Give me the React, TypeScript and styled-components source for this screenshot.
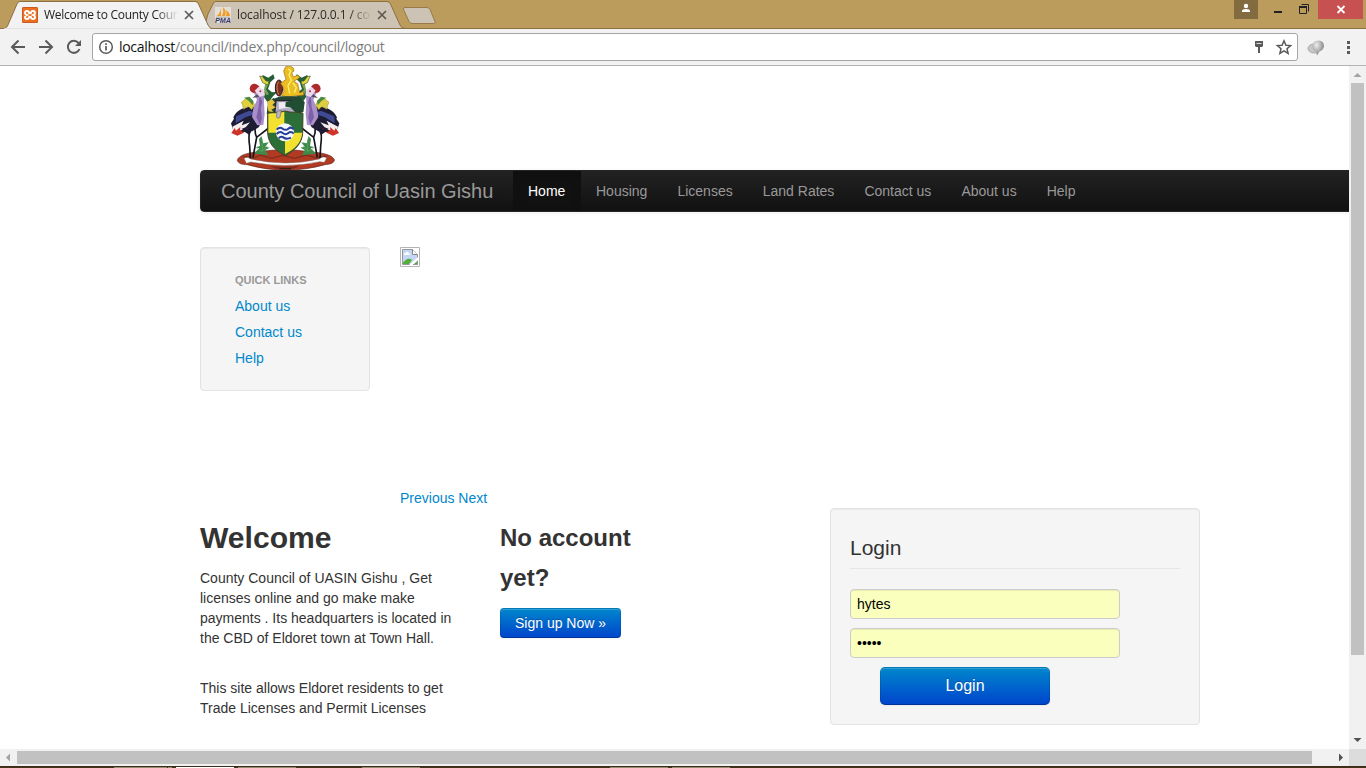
import React from 'react';
import styled, { createGlobalStyle } from 'styled-components';

const Global = createGlobalStyle`
  * { box-sizing: border-box; }
  html, body, #root { height: 100%; margin: 0; }
  body {
    overflow: hidden;
    font: 14px/20px "Liberation Sans", Arial, sans-serif;
    color: #333;
    background: #fff;
  }
  h2, h3, p, ul { margin: 0; padding: 0; }
  ul { list-style: none; }
  a { color: #0088cc; text-decoration: none; }
`;

const Browser = styled.div`
  display: flex;
  flex-direction: column;
  width: 1366px;
  height: 768px;
`;

/* ---- window frame ---- */
const TitleBar = styled.div`
  position: relative;
  display: flex;
  height: 29px;
  background: #bc9c5c;
  border-bottom: 1px solid #8c6f43;
`;
const TabShapes = styled.svg`
  position: absolute;
  left: 0;
  top: 0;
`;
const Tab = styled.div<{ $first?: boolean }>`
  position: relative;
  display: flex;
  align-items: center;
  width: ${p => (p.$first ? 197 : 193)}px;
  height: 29px;
  padding-left: ${p => (p.$first ? 22 : 18)}px;
  color: ${p => (p.$first ? '#222' : '#2d2925')};
`;
const TabTitle = styled.span<{ $ls: number }>`
  width: 137px;
  margin: 1px 0 0 6px;
  white-space: nowrap;
  font: 12px/16px "Open Sans", "Noto Sans", sans-serif;
  letter-spacing: ${p => p.$ls}px;
  mask-image: linear-gradient(90deg, #000 82%, transparent 98%);
`;
const WindowButtons = styled.div`
  display: flex;
  margin-left: auto;
  position: relative;
`;

/* ---- toolbar ---- */
const Toolbar = styled.div`
  display: flex;
  align-items: flex-start;
  height: 37px;
  padding: 4px 0 0;
  background: #f2f2f2;
  border-bottom: 1px solid #b4b3b1;
`;
const NavIcons = styled.svg`
  width: 92px;
  height: 28px;
`;
const Omnibox = styled.div`
  display: flex;
  align-items: center;
  width: 1206px;
  height: 28px;
  padding: 0 5px;
  background: #fff;
  border: 1px solid #a6a6a6;
  border-radius: 3px;
`;
const Url = styled.span`
  flex: 1;
  margin-left: 5px;
  font: 14px/20px "Open Sans", "Noto Sans", sans-serif;
  letter-spacing: -0.3px;
  color: #7d7d7d;
  b { font-weight: 400; color: #111; }
`;

/* ---- scrollable area ---- */
const Body = styled.div`
  display: flex;
  height: 683px;
`;
const Viewport = styled.main`
  width: 1349px;
  padding-left: 200px;
  overflow: hidden;
`;
const VScroll = styled.div`
  display: flex;
  flex-direction: column;
  align-items: center;
  width: 17px;
  background: #f1f1f1;
`;
const VThumb = styled.div`
  width: 13px;
  height: 572px;
  margin-bottom: 77px;
  background: #c1c1c1;
`;
const HScroll = styled.div`
  display: flex;
  align-items: center;
  height: 17px;
  background: #f1f1f1;
`;
const HThumb = styled.div`
  width: 1295px;
  height: 13px;
  margin-right: 20px;
  background: #c1c1c1;
`;
const Corner = styled.div`
  width: 17px;
  height: 17px;
  background: #dcdcdc;
`;
const Taskbar = styled.div`
  display: flex;
  height: 2px;
  background: #43331c;
  border-top: 1px solid #3c2d18;
`;
const TaskItem = styled.i<{ $gap: number; $w: number; $c?: string }>`
  width: ${p => p.$w}px;
  margin-left: ${p => p.$gap}px;
  background: ${p => p.$c || '#958a76'};
`;

/* ---- site ---- */
const Crest = styled.svg`
  display: block;
  width: 130px;
  height: 104px;
  margin-left: 20px;
`;
const Navbar = styled.nav`
  display: flex;
  width: 1170px;
  height: 42px;
  padding-left: 1px;
  background: linear-gradient(#222, #111);
  border: 1px solid #252525;
  border-radius: 4px;
  box-shadow: 0 1px 4px rgba(0, 0, 0, 0.065);
`;
const Brand = styled.a`
  width: 311px;
  padding: 10px 0 10px 19px;
  font-size: 20px;
  color: #999;
  white-space: nowrap;
`;
const NavLink = styled.a<{ $active?: boolean }>`
  padding: 10px ${p => (p.$active ? 15.65 : 15.05)}px 10px 15px;
  color: ${p => (p.$active ? '#fff' : '#999')};
  background: ${p => (p.$active ? '#111' : 'transparent')};
  box-shadow: ${p => (p.$active ? 'inset 0 3px 8px rgba(0,0,0,.125)' : 'none')};
`;
const Row = styled.div`
  display: flex;
  align-items: flex-start;
`;
const TopRow = styled(Row)`
  height: 261px;
  margin-top: 35px;
  gap: 30px;
`;
const Well = styled.section`
  background: #f5f5f5;
  border: 1px solid #e3e3e3;
  border-radius: 4px;
  box-shadow: inset 0 1px 1px rgba(0, 0, 0, 0.05);
`;
const QuickLinks = styled(Well)`
  width: 170px;
  height: 144px;
  padding: 22px 34px;
`;
const LinksHead = styled.div`
  font-size: 11px;
  font-weight: 700;
  line-height: 20px;
  margin-bottom: 3px;
  color: #999;
  text-transform: uppercase;
  white-space: nowrap;
`;
const QuickLink = styled.li`
  padding: 3px 0;
`;
const Carousel = styled.div`
  display: flex;
  flex-direction: column;
  justify-content: space-between;
  height: 261px;
`;
const Welcome = styled.div`
  width: 270px;
  margin-right: 30px;
  padding-top: 10px;
  h2 { font-size: 30.1px; line-height: 40px; margin-bottom: 10px; }
  p { width: 262px; }
  p + p { margin-top: 30px; }
`;
const SignUp = styled.div`
  width: 170px;
  margin-right: 160px;
  padding-top: 10px;
  h3 { font-size: 24px; line-height: 40px; margin-bottom: 10px; }
`;
const Button = styled.button<{ $large?: boolean }>`
  display: block;
  width: ${p => (p.$large ? 170 : 121)}px;
  height: ${p => (p.$large ? 38 : 30)}px;
  margin: ${p => (p.$large ? '9px 0 0 30px' : '0')};
  padding: 0;
  font: ${p => (p.$large ? 16 : 14)}px/20px "Liberation Sans", Arial, sans-serif;
  color: #fff;
  text-shadow: 0 -1px 0 rgba(0, 0, 0, 0.25);
  background: linear-gradient(#0088cc, #0044cc) border-box;
  border: 1px solid;
  border-color: rgba(0, 0, 0, 0.1) rgba(0, 0, 0, 0.1) rgba(0, 0, 0, 0.25);
  border-radius: ${p => (p.$large ? 5 : 4)}px;
  box-shadow: inset 0 1px 0 rgba(255, 255, 255, 0.2), 0 1px 2px rgba(0, 0, 0, 0.05);
`;
const LoginBox = styled(Well)`
  width: 370px;
  height: 217px;
  padding: 19px;
`;
const Legend = styled.div`
  height: 41px;
  margin-bottom: 20px;
  font-size: 21px;
  line-height: 40px;
  border-bottom: 1px solid #e5e5e5;
`;
const Input = styled.input`
  display: block;
  width: 270px;
  height: 30px;
  padding: 4px 6px;
  font: 14px/20px "Liberation Sans", Arial, sans-serif;
  color: #000;
  background: #faffbd;
  border: 1px solid #ccc;
  border-radius: 4px;
  box-shadow: inset 0 1px 1px rgba(0, 0, 0, 0.075);
  outline: 0;
  & + & { margin-top: 9px; }
`;

const ScrollArrow = styled.svg.attrs({ width: 17, height: 17, viewBox: '0 0 17 17' })`
  flex: none;
`;

const Close = ({ c }: { c: string }) => (
  <svg width="16" height="16" viewBox="0 0 16 16"><path d="M4 4l8 8M12 4l-8 8" stroke={c} strokeWidth="1.700" /></svg>
);

const Bird = () => (
  <g>
    <path d="M92 196C84 215 86 232 89 252L91 290M106 190c0 12-4 20 4 36l36-28M110 226l-11 60" stroke="#15131c" strokeWidth="5" fill="none" />
    <path d="M40 166c10-22 36-34 64-31l28 17-4 24-12 20-20 12-22-2-16-10-20 4-5-16 9-14z" fill="#1d1c33" />
    <path d="M48 163l40-17 24 8-36 12-29 18z" fill="#3f4a94" />
    <path d="M37 194l34-18-6 14 25-9-13 15-37 15z" fill="#f4eeee" />
    <path d="M34 213l10-15 4 8 13-11-1 10 24-7-14 15-18 8z" fill="#cf3429" />
    <path d="M62 207l14-10 20 8-8 14-12-8z" fill="#1d1c33" />
    <path d="M102 93c14-8 29-7 31 6l-1 23 2 34-4 33-18 1-16-25 4-26 11-26z" fill="#ab8fca" />
    <path d="M119 100l8 20-5 20 4 28-6 20-11-22 7-32z" fill="#7c61a6" />
    <path d="M89 80c1-17 20-20 28-7l2 15-15 5c-9 0-14-6-15-13z" fill="#b02a2c" />
    <path d="M104 86l12-12 17 10 2 16-16 5z" fill="#ebdaec" />
    <circle cx="121" cy="88" r="3" fill="#b22d35" />
    <path d="M111 97l-14 11 21-4z" fill="#555059" />
    <path d="M64 121l17-14 16 8 7 14-9 14-10-10-14 9-3-12z" fill="#dfce3e" stroke="#8d8b34" strokeWidth="1.500" />
    <path d="M72 107l16-3 12 13-2 13-12-14z" fill="#4b8a42" />
  </g>
);

const HalfMantle = () => (
  <g>
    <path d="M145 156l3-28-18-25 6-38-12-12 4-14 17 8 15-10 4 12-13 12-7 20 12 10 16-2-13 14-8 10 13 12 9 24z" fill="#255f36" />
    <path d="M136 56l11 7-9 19 9 15-8 3-6-14z" fill="#74a650" />
    <path d="M119 42l9 2 10 13 9 1-4 11-15-7-4-9z" fill="#e0d93e" stroke="#555b27" strokeWidth="2" />
    <path d="M145 116l17-8 7 18-18 3z" fill="#183d29" />
    <path d="M101 275l17-16-12-3 14-4-3-20 7-10 6 22 16-3-10 13 13 3-13 7 8 16-26-3z" fill="#3d8b4b" />
    <path d="M126 230l2 38M110 259l16 9 16-16" stroke="#69a85d" strokeWidth="2" fill="none" />
  </g>
);

const CoatOfArms = () => (
  <Crest viewBox="0 12 390 312">
    <path d="M52 295c3-16 35-24 65-25 50-9 104-9 150 0 34 1 69 7 76 23 1 10-14 14-28 15-77 22-161 21-233 0-16 0-27-3-30-13z" fill="#b23a22" stroke="#5c2520" strokeWidth="2" />
    <path d="M70 284l33 4 19-9 32 10 34-9 36 9 36-10 28 9 32-6" stroke="#7d2f1c" strokeWidth="4" fill="none" />
    <HalfMantle />
    <g transform="translate(390 0) scale(-1 1)"><HalfMantle /></g>
    <Bird />
    <g transform="translate(391 0) scale(-1 1)"><Bird /></g>
    <ellipse cx="177" cy="78" rx="11" ry="24" fill="#7b2f21" stroke="#30201b" strokeWidth="3" />
    <path d="M176 59c-7 11-6 24 0 39" stroke="#cf8365" strokeWidth="3" fill="none" />
    <path d="M191 27l6-13 12-3 11 7 2 9-7 5 5 13 14-6 5 8-17 11 11 7 6 28 11-5 1 11-50 6-18-6 9-9-3-15-7-11 16-12-4-13z" fill="#eabd22" stroke="#a46e19" strokeWidth="2" />
    <path d="M204 20l8 7-5 13 7 15-10 15 5 25M219 63l10 14-6 15" stroke="#fff16c" strokeWidth="4" fill="none" />
    <path d="M157 112l25-9h55l17 18-4 30-110 4 4-31z" fill="#244832" />
    <path d="M168 116h62l10 32-16 8h-60z" fill="#b5adc6" stroke="#27242d" strokeWidth="4" />
    <path d="M176 121l36-1-3 16-32 5z" fill="#efeaf3" />
    <path d="M197 121l27-9 29 8-4 26-22 6-16-16-15-2z" fill="#214e32" />
    <path d="M142 119l13-8 10 10-8 8 10 7-13 7 7 8-16-3z" fill="#e3c43b" />
    <path d="M143 153c19-4 32 0 52-6 23 7 34 1 54 7l-1 60c-3 31-21 50-53 67-33-18-49-36-52-67z" fill="#2b6e38" stroke="#424321" strokeWidth="3" />
    <path d="M145 155c18-3 29 0 48-6v63h-48zM195 212h52c-4 31-21 48-52 64z" fill="#f2e12e" />
    <path d="M171 148l-2 17c2 5 10 5 11 0l4-20z" fill="#bbb4c5" stroke="#716a80" strokeWidth="2" />
    <circle cx="195" cy="211" r="27" fill="#f6f8ff" />
    <path d="M170 203q9-10 18-3t17 0 16 2M170 216q9-10 18-3t17 0 16 2M176 229q7-8 15-2t22 0" stroke="#263c99" strokeWidth="6" fill="none" />
    <path d="M72 289c6-4 14-4 20 2q104 24 206 0c7-7 15-8 22-3l-7 13-14-2q-104 22-206 1l-14 4z" fill="#fff" stroke="#756a68" strokeWidth="1.500" />
    <path d="M150 312l18 8h53l19-8q-46 5-90 0z" fill="#81281d" />
    <path d="M178 320h35" stroke="#332019" strokeWidth="4" />
  </Crest>
);

const BrokenImage = () => (
  <svg width="20" height="20" viewBox="0 0 20 20">
    <path d="M.5.5h19v19H.5z" fill="#fff" stroke="#b5b5b5" />
    <path d="M2.500 2.500h10l5 5v10h-15z" fill="#c3d6f5" stroke="#969696" />
    <path d="M4 7.500q0-2 2-2 2-2 3 1 2 0 1 1.500H4z" fill="#fff" />
    <path d="M3 17v-1.500q5-6 9-2.500l-3 4z" fill="#53ad36" />
    <path d="M12.500 2.500v5h5" fill="#fff" stroke="#888" />
    <path d="M9 18l9-8v3l-5 5z" fill="#fff" />
    <path d="M13.500 17.500h4V14z" fill="#53ad36" />
    <path d="M13 17.500h4.500V14" fill="none" stroke="#969696" />
  </svg>
);

const XamppIcon = () => (
  <svg width="16" height="16" viewBox="0 0 16 16">
    <rect width="16" height="16" rx="1.500" fill="#ec6f22" />
    <rect x=".5" y=".5" width="15" height="15" rx="1" fill="none" stroke="#c75b21" />
    <path d="M5 4Q2.900 4 3 6q.2 1.500 1.700 2Q3.200 8.500 3 10q-.1 2 2 2 1.800 0 2.200-2h1.600q.4 2 2.200 2 2.100 0 2-2-.2-1.500-1.700-2Q12.800 7.500 13 6q.1-2-2-2-1.800 0-2.200 2H7.200Q6.800 4 5 4z" fill="none" stroke="#fff" strokeWidth="1.900" />
  </svg>
);

const PmaIcon = () => (
  <svg width="16" height="16" viewBox="0 0 16 16">
    <path d="M0 0h16v16H0z" fill="#e3dfd7" />
    <path d="M6 1v8H1.500Q5 7 6 1zM8 0q4 4 2 9H7q2-4 1-9zM11 3q4 3 4 6h-4q1-3 0-6z" fill="#f39a22" />
    <path d="M1 10.200h14" stroke="#b5a999" />
    <text x="0" y="16" fontFamily="Liberation Sans" fontSize="6.500" fontWeight="700" fontStyle="italic" fill="#38386c" textLength="16" lengthAdjust="spacingAndGlyphs">PMA</text>
  </svg>
);

const navItems = ['Home', 'Housing', 'Licenses', 'Land Rates', 'Contact us', 'About us', 'Help'];
const quickLinks = ['About us', 'Contact us', 'Help'];

export default function App() {
  return (
    <Browser>
      <Global />
      <TitleBar>
        <TabShapes width="450" height="29">
          <path d="M204 28.500L208 14 213.500 3Q214.500 1.500 216 1.500H387Q389.500 1.500 390.500 4L400 25Q401.500 28.500 405 28.500H211z" fill="#cdc3b4" stroke="#8c6f43" />
          <path d="M0 29Q6 29 7.500 26L17 4Q18 1.500 20 1.500H195Q197.500 1.500 198.500 4L208 25Q209.500 28.500 213 29z" fill="#f2f2f2" stroke="#8c6f43" />
          <path d="M4 29h206" stroke="#f2f2f2" strokeWidth="1.500" />
          <path d="M405 7.500h22q2 0 3 2l5 12q.7 2-1.500 2H412q-2 0-3-2l-5.500-12q-.6-2 1.500-2z" fill="#cdc3b4" stroke="#98794a" />
        </TabShapes>
        <Tab $first>
          <XamppIcon />
          <TabTitle $ls={-0.27}>Welcome to County Coun</TabTitle>
          <Close c="#5a5a5a" />
        </Tab>
        <Tab>
          <PmaIcon />
          <TabTitle $ls={-0.1}>localhost / 127.0.0.1 / cou</TabTitle>
          <Close c="#5f5950" />
        </Tab>
        <WindowButtons>
          <svg width="132" height="28" viewBox="1234 0 132 28">
            <path d="M1234 0h24v19h-24z" fill="#836b40" />
            <circle cx="1246" cy="6" r="2.200" fill="#fff" />
            <path d="M1242 12V11q0-2 4-2t4 2v1z" fill="#fff" />
            <path d="M1274 11h8v2h-8z" fill="#222" />
            <path d="M1299.500 6.500h7v7h-7zM1301.500 4.500h7v7" fill="none" stroke="#222" />
            <path d="M1299 6h8v2h-8z" fill="#222" />
            <path d="M1318 0h45v19h-45z" fill="#c75050" />
            <path d="M1337.500 6l7 7M1344.500 6l-7 7" stroke="#fff" strokeWidth="1.800" />
          </svg>
        </WindowButtons>
      </TitleBar>
      <Toolbar>
        <NavIcons viewBox="0 33 92 28" fill="none" stroke="#5a5a5a" strokeWidth="2">
          <path d="M25 47H12.500M18.500 40.500L12 47l6.500 6.500M39 47h12.500M45.500 40.500L52 47l-6.500 6.500" />
          <path d="M78.500 43A6 6 0 1 0 79.500 49" />
          <path d="M81 40v6h-6z" fill="#5a5a5a" stroke="none" />
        </NavIcons>
        <Omnibox>
          <svg width="16" height="16" viewBox="0 0 16 16" fill="none" stroke="#5a5a5a" strokeWidth="1.500">
            <circle cx="8" cy="8" r="6.300" /><path d="M8 7v4.500M8 4.300v1.600" strokeWidth="1.700" />
          </svg>
          <Url><b>localhost</b>/council/index.php/council/logout</Url>
          <svg width="44" height="26" viewBox="1248 34 44 26">
            <path d="M1255 41h8v5l-1 1h-2v6h-2v-6h-2l-1-1z" fill="#5a5a5a" />
            <path d="M1256.500 43.500h5" stroke="#ddd" />
            <path d="M1284 40.800l1.900 4.400 4.700.4-3.600 3.100 1.100 4.700-4.100-2.500-4.100 2.500 1.100-4.700-3.600-3.100 4.700-.4z" fill="none" stroke="#5a5a5a" strokeWidth="1.500" />
          </svg>
        </Omnibox>
        <svg width="68" height="28" viewBox="1298 33 68 28">
          <defs>
            <radialGradient id="ball" cx=".35" cy=".3" r=".8"><stop offset="0" stopColor="#eee" /><stop offset=".5" stopColor="#b0b0b0" /><stop offset="1" stopColor="#707070" /></radialGradient>
          </defs>
          <ellipse cx="1314" cy="48.500" rx="6" ry="4.500" fill="#c6c6c6" stroke="#aaa" />
          <path d="M1312.500 46.500q0-6 5.800-6t5.700 6q-1 4-4.500 5l-2.500 4-1-4q-3.500-1-3.500-5z" fill="url(#ball)" />
          <path d="M1347 41h3v3h-3zM1347 46h3v3h-3zM1347 51h3v3h-3z" fill="#5a5a5a" />
        </svg>
      </Toolbar>
      <Body>
        <Viewport>
          <CoatOfArms />
          <Navbar>
            <Brand>County Council of Uasin Gishu</Brand>
            {navItems.map((n, i) => <NavLink key={n} $active={i === 0}>{n}</NavLink>)}
          </Navbar>
          <TopRow>
            <QuickLinks>
              <LinksHead>Quick Links</LinksHead>
              <ul>
                {quickLinks.map(l => <QuickLink key={l}><a>{l}</a></QuickLink>)}
              </ul>
            </QuickLinks>
            <Carousel>
              <BrokenImage />
              <div><a>Previous</a> <a>Next</a></div>
            </Carousel>
          </TopRow>
          <Row>
            <Welcome>
              <h2>Welcome</h2>
              <p>County Council of UASIN Gishu , Get licenses online and go make make payments . Its headquarters is located in the CBD of Eldoret town at Town Hall.</p>
              <p>This site allows Eldoret residents to get Trade Licenses and Permit Licenses</p>
            </Welcome>
            <SignUp>
              <h3>No account yet?</h3>
              <Button>Sign up Now »</Button>
            </SignUp>
            <LoginBox>
              <Legend>Login</Legend>
              <Input defaultValue="hytes" />
              <Input type="password" defaultValue="12345" />
              <Button $large>Login</Button>
            </LoginBox>
          </Row>
        </Viewport>
        <VScroll>
          <ScrollArrow><path d="M4.500 11h8l-4-4z" fill="#a3a3a3" /></ScrollArrow>
          <VThumb />
          <ScrollArrow><path d="M4.500 6h8l-4 4z" fill="#505050" /></ScrollArrow>
        </VScroll>
      </Body>
      <HScroll>
        <ScrollArrow><path d="M10 4.500v8l-4-4z" fill="#a3a3a3" /></ScrollArrow>
        <HThumb />
        <ScrollArrow><path d="M7 4.500v8l4-4z" fill="#505050" /></ScrollArrow>
        <Corner />
      </HScroll>
      <Taskbar>
        <TaskItem $gap={114} $w={53} />
        <TaskItem $gap={1} $w={4} />
        <TaskItem $gap={4} $w={58} $c="#fff" />
        <TaskItem $gap={4} $w={58} />
        <TaskItem $gap={66} $w={58} />
        <TaskItem $gap={190} $w={58} />
        <TaskItem $gap={4} $w={58} />
      </Taskbar>
    </Browser>
  );
}
